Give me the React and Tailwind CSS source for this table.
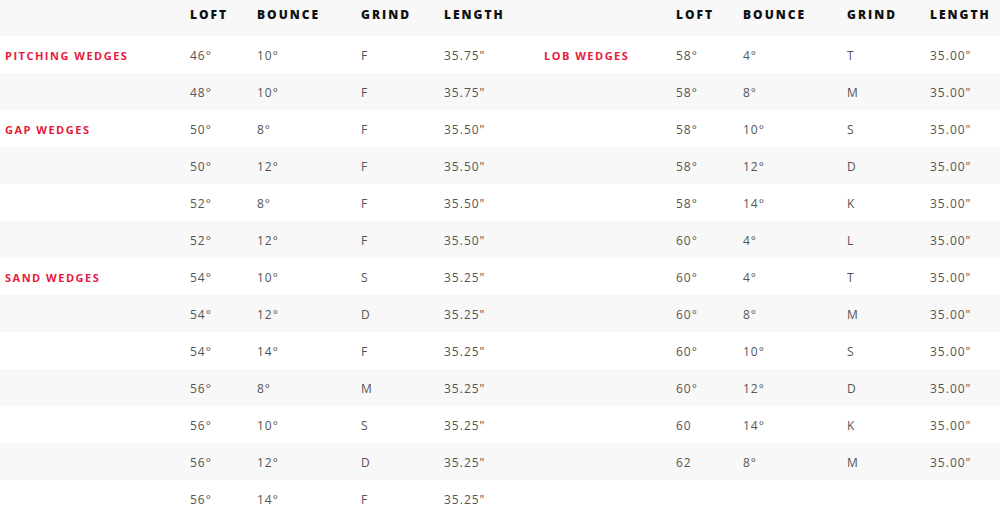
import React from "react";

const left = [
  ["PITCHING WEDGES", "46°", "10°", "F", '35.75"'],
  ["", "48°", "10°", "F", '35.75"'],
  ["GAP WEDGES", "50°", "8°", "F", '35.50"'],
  ["", "50°", "12°", "F", '35.50"'],
  ["", "52°", "8°", "F", '35.50"'],
  ["", "52°", "12°", "F", '35.50"'],
  ["SAND WEDGES", "54°", "10°", "S", '35.25"'],
  ["", "54°", "12°", "D", '35.25"'],
  ["", "54°", "14°", "F", '35.25"'],
  ["", "56°", "8°", "M", '35.25"'],
  ["", "56°", "10°", "S", '35.25"'],
  ["", "56°", "12°", "D", '35.25"'],
  ["", "56°", "14°", "F", '35.25"'],
];

const right = [
  ["LOB WEDGES", "58°", "4°", "T", '35.00"'],
  ["", "58°", "8°", "M", '35.00"'],
  ["", "58°", "10°", "S", '35.00"'],
  ["", "58°", "12°", "D", '35.00"'],
  ["", "58°", "14°", "K", '35.00"'],
  ["", "60°", "4°", "L", '35.00"'],
  ["", "60°", "4°", "T", '35.00"'],
  ["", "60°", "8°", "M", '35.00"'],
  ["", "60°", "10°", "S", '35.00"'],
  ["", "60°", "12°", "D", '35.00"'],
  ["", "60", "14°", "K", '35.00"'],
  ["", "62", "8°", "M", '35.00"'],
];

function SpecTable({ rows, widths }) {
  return (
    <table className="table-fixed border-collapse" style={{ width: widths.reduce((a, b) => a + b, 0) }}>
      <colgroup>
        {widths.map((w, i) => (
          <col key={i} style={{ width: w }} />
        ))}
      </colgroup>
      <thead>
        <tr className="h-[36px] bg-[#f8f8f8]">
          <th />
          {["LOFT", "BOUNCE", "GRIND", "LENGTH"].map((h) => (
            <th
              key={h}
              className="pl-[5px] pb-[6px] text-left align-middle text-[12px] font-extrabold tracking-[2px] text-[#111]"
            >
              {h}
            </th>
          ))}
        </tr>
      </thead>
      <tbody>
        {rows.map((r, i) => (
          <tr key={i} className={`h-[37px] ${i % 2 === 1 ? "bg-[#f8f8f8]" : "bg-white"}`}>
            <td className="pl-[5px] pt-[3px] align-middle text-[11px] font-bold tracking-[1.5px] text-[#e8193c] whitespace-nowrap">
              {r[0]}
            </td>
            {r.slice(1).map((c, j) => (
              <td
                key={j}
                className="pl-[5px] pt-[2px] align-middle text-[12px] tracking-[1px] text-[#555]"
              >
                {c}
              </td>
            ))}
          </tr>
        ))}
        {rows.length < 13 && <tr className="h-[37px] bg-white"><td colSpan={5} /></tr>}
      </tbody>
    </table>
  );
}

export default function App() {
  return (
    <div className="flex w-[1000px] h-[513px] overflow-hidden bg-white font-['Open_Sans',sans-serif]">
      <SpecTable rows={left} widths={[185, 67, 104, 83, 100]} />
      <SpecTable rows={right} widths={[132, 67, 104, 83, 75]} />
    </div>
  );
}
